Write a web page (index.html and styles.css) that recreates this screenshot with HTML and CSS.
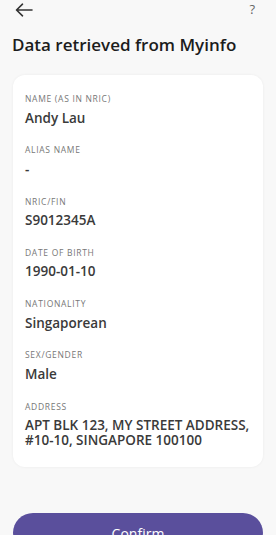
FILE: index.html
```html
<!DOCTYPE html>
<html lang="en">
    <head>
        <meta charset="UTF-8">
        <meta name="viewport" content="width=device-width, initial-scale=1.0">
        <title>Data retrieved from Myinfo</title>
        <link rel="stylesheet" href="styles.css">
    </head>
    <body>
        <div class="screen">
            <div class="top-bar">
                <button class="icon-btn back-btn" aria-label="Back">
                    <svg width="18" height="14" viewBox="0 0 18 14" fill="none" stroke="#333" stroke-width="1.6" stroke-linecap="round" stroke-linejoin="round">
                        <path d="M17 7H2M7.5 1.2L1.5 7l6 5.8"/>
                    </svg>
                </button>
                <span class="help">?</span>
            </div>
            <h1 class="title">Data retrieved from Myinfo</h1>
            <div class="card">
                <div class="field">
                    <div class="label">Name (as in NRIC)</div>
                    <div class="value">Andy Lau</div>
                </div>
                <div class="field">
                    <div class="label">Alias name</div>
                    <div class="value">-</div>
                </div>
                <div class="field">
                    <div class="label">NRIC/FIN</div>
                    <div class="value">S9012345A</div>
                </div>
                <div class="field">
                    <div class="label">Date of birth</div>
                    <div class="value">1990-01-10</div>
                </div>
                <div class="field">
                    <div class="label">Nationality</div>
                    <div class="value">Singaporean</div>
                </div>
                <div class="field">
                    <div class="label">Sex/Gender</div>
                    <div class="value">Male</div>
                </div>
                <div class="field">
                    <div class="label">Address</div>
                    <div class="value">APT BLK 123, MY STREET ADDRESS, #10-10, SINGAPORE 100100</div>
                </div>
            </div>
            <button class="btn-confirm">Confirm</button>
        </div>
    </body>
</html>
```

FILE: styles.css
```css
* {
    box-sizing: border-box;
}

body {
    margin: 0;
    background-color: #f8f8f8;
    font-family: "Open Sans", "Liberation Sans", sans-serif;
    color: #333333;
}

.screen {
    padding: 0 13px;
}

.top-bar {
    height: 20px;
    display: flex;
    align-items: center;
    justify-content: space-between;
}

.icon-btn {
    background: none;
    border: none;
    padding: 0;
    margin-left: 2px;
    display: flex;
}

.help {
    font-size: 13px;
    color: #666666;
    margin-right: 8px;
    margin-bottom: 2px;
}

.title {
    margin: 13px 0 0 -1px;
    font-size: 17px;
    font-weight: 600;
    line-height: 24px;
    color: #1c1c1c;
}

.card {
    margin-top: 18px;
    background-color: white;
    border-radius: 12px;
    box-shadow: 0 0 3px rgba(0, 0, 0, 0.06);
    padding: 18px 12px 19px;
    display: flex;
    flex-direction: column;
    gap: 18.8px;
}

.label {
    font-size: 8.5px;
    letter-spacing: 0.7px;
    text-transform: uppercase;
    color: #777777;
    line-height: 12px;
}

.value {
    margin-top: 5.5px;
    font-size: 13.5px;
    font-weight: 600;
    line-height: 15px;
    color: #3a3a3a;
}

.btn-confirm {
    display: block;
    width: 100%;
    margin-top: 46px;
    height: 40px;
    border: none;
    border-radius: 20px;
    background-color: #5a4f9c;
    color: white;
    font-family: inherit;
    font-size: 14px;
    font-weight: 500;
}
```
